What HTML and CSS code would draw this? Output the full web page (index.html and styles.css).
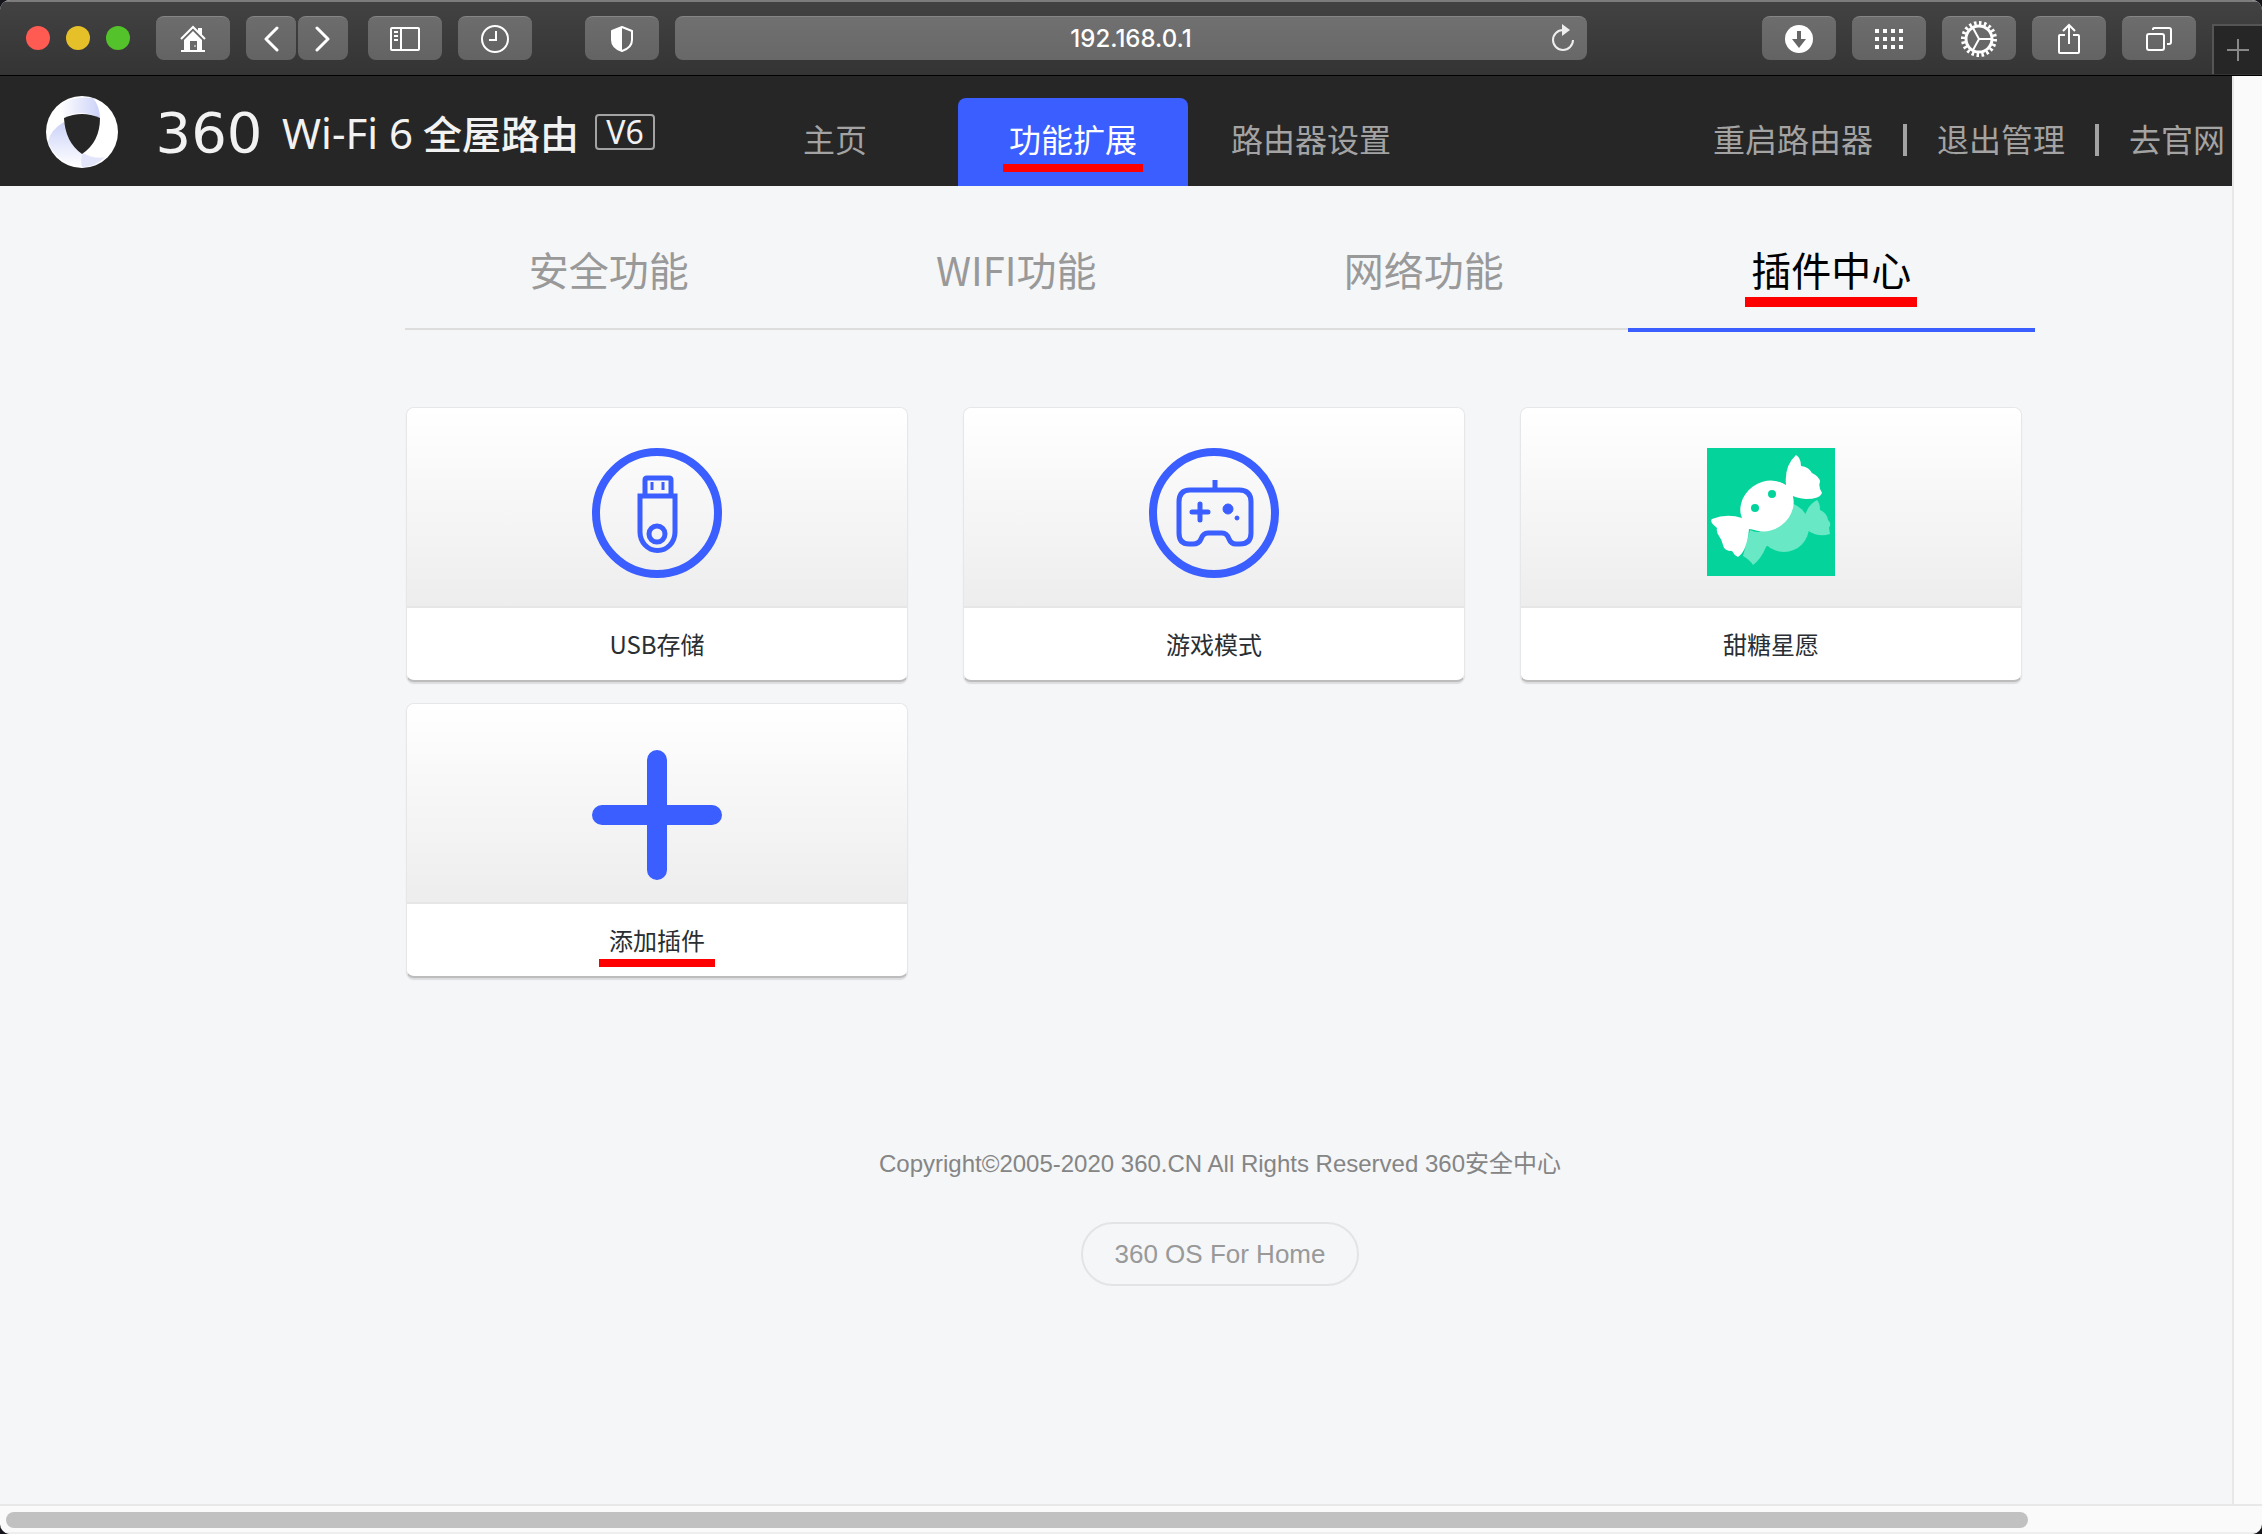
FILE: index.html
```html
<!DOCTYPE html>
<html lang="zh-CN">

<head>
    <meta charset="UTF-8">
    <meta name="viewport" content="width=device-width, initial-scale=1.0">
    <title>360 Wi-Fi 6 全屋路由</title>
    <link rel="stylesheet" href="styles.css">
</head>

<body>
    <div class="window">
        <div class="toolbar">
            <div class="lights">
                <span class="light red"></span>
                <span class="light yellow"></span>
                <span class="light green"></span>
            </div>
            <button class="tool" aria-label="Home">
                <svg width="28" height="28" viewBox="0 0 28 28">
                    <path d="M2 14 L14 2 L26 14" fill="none" stroke="#fff" stroke-width="2" />
                    <path d="M19 3h4v8l-4-4z M14 6 L23 15 V25 H26 V27 H2 V25 H5 V15z" fill="#fff" />
                    <path d="M11 16h7v9h-7z" fill="#6a6a6a" />
                    <path d="M16 20v2" stroke="#fff" />
                </svg>
            </button>
            <div class="history">
                <button class="tool small" aria-label="Back">
                    <svg width="16" height="26" viewBox="0 0 16 26"><path d="M14 2 L3 13 L14 24" fill="none" stroke="#fff" stroke-width="3" stroke-linecap="round" stroke-linejoin="round" /></svg>
                </button>
                <button class="tool small" aria-label="Forward">
                    <svg width="16" height="26" viewBox="0 0 16 26"><path d="M2 2 L13 13 L2 24" fill="none" stroke="#fff" stroke-width="3" stroke-linecap="round" stroke-linejoin="round" /></svg>
                </button>
            </div>
            <button class="tool" aria-label="Sidebar">
                <svg width="30" height="24" viewBox="0 0 30 24" fill="none" stroke="#fff" stroke-width="2">
                    <rect x="1" y="1" width="28" height="22" rx="1" />
                    <path d="M11 1v22M4 5h4M4 9h4M4 13h4" />
                </svg>
            </button>
            <button class="tool" aria-label="Recent">
                <svg width="28" height="28" viewBox="0 0 28 28" fill="none" stroke="#fff" stroke-width="2">
                    <circle cx="14" cy="14" r="13" />
                    <path d="M15 6v9H8" />
                </svg>
            </button>
            <button class="tool privacy" aria-label="Privacy report">
                <svg width="24" height="28" viewBox="0 0 24 28">
                    <path d="M12 2 L22 6 V15 C22 20 18 24 12 26 C6 24 2 20 2 15 V6z" fill="none" stroke="#fff" stroke-width="2" stroke-linejoin="round" />
                    <path d="M12 2 L2 6 V15 C2 20 6 24 12 26z" fill="#fff" />
                </svg>
            </button>
            <div class="address">
                <input type="text" class="url" value="192.168.0.1" aria-label="Address">
                <button class="reload" aria-label="Reload">
                    <svg width="24" height="28" viewBox="0 0 24 28">
                        <path d="M12 6 A10 10 0 1 0 22 16" fill="none" stroke="#eee" stroke-width="2" />
                        <path d="M11 0 L19 6 L11 12z" fill="#eee" />
                    </svg>
                </button>
            </div>
            <div class="tools-right">
                <button class="tool" aria-label="Downloads">
                    <svg width="28" height="28" viewBox="0 0 28 28">
                        <circle cx="14" cy="14" r="14" fill="#fff" />
                        <path d="M12 6h4v8h5l-7 9-7-9h5z" fill="#666" />
                    </svg>
                </button>
                <button class="tool" aria-label="Top sites">
                    <svg width="28" height="20" viewBox="0 0 28 20" stroke="#fff" stroke-width="4" stroke-dasharray="4 4">
                        <path d="M0 2h28M0 10h28M0 18h28" />
                    </svg>
                </button>
                <button class="tool" aria-label="Settings">
                    <svg width="36" height="36" viewBox="0 0 36 36" fill="none" stroke="#fff">
                        <circle cx="18" cy="18" r="13" stroke-width="3" />
                        <circle cx="18" cy="18" r="16" stroke-width="4" pathLength="80" stroke-dasharray="2 2" />
                        <path d="M18 18h12M18 18l-6-11M18 18l-6 11" stroke-width="2" />
                    </svg>
                </button>
                <button class="tool" aria-label="Share">
                    <svg width="24" height="32" viewBox="0 0 24 32" fill="none" stroke="#fff" stroke-width="2">
                        <path d="M8 12H3Q2 12 2 13V29Q2 30 3 30H21Q22 30 22 29V13Q22 12 21 12H16M12 21V2M6 8l6-6 6 6" />
                    </svg>
                </button>
                <button class="tool" aria-label="Tab overview">
                    <svg width="26" height="24" viewBox="0 0 26 24" fill="none" stroke="#fff" stroke-width="2">
                        <rect x="1" y="7" width="17" height="16" rx="2" />
                        <path d="M7 3V2Q7 1 8 1H23Q25 1 25 3V15Q25 17 23 17H21" />
                    </svg>
                </button>
            </div>
            <button class="new-tab" aria-label="New tab">
                <svg width="22" height="22" viewBox="0 0 22 22"><path d="M11 0v22M0 11h22" stroke="#888" stroke-width="2" /></svg>
            </button>
        </div>

        <div class="viewport">
            <div class="page">
                <header class="header">
                    <div class="brand">
                        <svg class="brand-mark" width="72" height="72" viewBox="0 0 72 72">
                            <defs>
                                <linearGradient id="foldTop" x1="0" y1="0" x2="1" y2="0">
                                    <stop offset="0" stop-color="#fff" />
                                    <stop offset="1" stop-color="#ccd2f8" />
                                </linearGradient>
                                <linearGradient id="foldLeft" x1="0" y1="0" x2="0" y2="1">
                                    <stop offset="0" stop-color="#ccd2f8" />
                                    <stop offset="1" stop-color="#fff" />
                                </linearGradient>
                            </defs>
                            <circle cx="36" cy="36" r="36" fill="#fff" />
                            <path d="M14 8 Q28 0 47 2 Q54 10 54 23 Q38 12 18 21z" fill="url(#foldTop)" />
                            <path d="M18 26 Q4 34 2 46 Q10 66 32 71 Q44 68 58 61 Q46 62 36 57 Q20 46 18 26z" fill="url(#foldLeft)" />
                            <path d="M37 57 Q48 64 59 61 Q50 71 36 71 Q34 64 37 57z" fill="#e3e6fb" />
                            <path d="M18 22 Q36 14 54 22 Q54 46 36 58 Q19 46 18 22z" fill="#262626" />
                        </svg>
                        <span class="brand-360">360</span>
                        <span class="brand-wifi">Wi-Fi 6</span>
                        <span class="brand-name">全屋路由</span>
                        <span class="brand-model">V6</span>
                    </div>
                    <nav class="nav">
                        <a href="#">主页</a>
                        <a href="#" class="active"><span class="marked">功能扩展</span></a>
                        <a href="#">路由器设置</a>
                    </nav>
                    <div class="actions">
                        <a href="#">重启路由器</a>
                        <span class="divider"></span>
                        <a href="#">退出管理</a>
                        <span class="divider"></span>
                        <a href="#">去官网</a>
                    </div>
                </header>

                <main class="content">
                    <nav class="tabs">
                        <a href="#">安全功能</a>
                        <a href="#">WIFI功能</a>
                        <a href="#">网络功能</a>
                        <a href="#" class="active"><span class="marked">插件中心</span></a>
                    </nav>

                    <div class="cards">
                        <a href="#" class="card">
                            <div class="card-icon">
                                <svg width="130" height="130" viewBox="0 0 130 130" fill="none" stroke="#3a5eff">
                                    <circle cx="65" cy="65" r="61" stroke-width="8" />
                                    <path d="M53 47V32Q53 30 55 30H77Q79 30 79 32V47" stroke-width="5" />
                                    <path d="M48 48H83V84A17 18 0 0 1 48 84z" stroke-width="5" />
                                    <circle cx="65" cy="86" r="8" stroke-width="5" />
                                    <path d="M60 34v8M71 34v8" stroke-width="3" />
                                </svg>
                            </div>
                            <div class="card-label">USB存储</div>
                        </a>
                        <a href="#" class="card">
                            <div class="card-icon">
                                <svg width="130" height="130" viewBox="0 0 130 130" fill="none" stroke="#3a5eff">
                                    <circle cx="65" cy="65" r="61" stroke-width="8" />
                                    <path d="M41 42H90Q102 42 102 54V85Q102 96 91 96H87Q82 96 80 91Q78 85 73 85H59Q54 85 52 91Q50 96 44 96H40Q30 96 30 85V54Q30 42 41 42z" stroke-width="5" />
                                    <path d="M66 32v10" stroke-width="5" />
                                    <path d="M51 56v16M43 64h16" stroke-width="5" stroke-linecap="round" />
                                    <circle cx="79" cy="61" r="5" fill="#3a5eff" />
                                    <circle cx="88" cy="70" r="2" fill="#3a5eff" />
                                </svg>
                            </div>
                            <div class="card-label">游戏模式</div>
                        </a>
                        <a href="#" class="card">
                            <div class="card-icon">
                                <svg width="128" height="128" viewBox="0 0 128 128">
                                    <rect width="128" height="128" fill="#04d49c" />
                                    <g fill="#68e8c4">
                                        <circle cx="77" cy="79" r="25" />
                                        <path d="M86 64 Q92 70 97 72 Q99 58 110 52 Q113 55 113 62 Q120 65 121 72 Q125 75 122 80 L123 86 Q111 90 100 82 L98 92z" />
                                        <path d="M43 82 Q52 87 60 80 L66 98 Q60 96 59 99 Q54 111 46 117 Q43 112 36 108z" />
                                    </g>
                                    <g fill="#fff">
                                        <ellipse cx="60" cy="58" rx="28" ry="24" transform="rotate(-36 60 58)" />
                                        <path d="M66 34 Q74 34 79 37 Q77 18 89 7 Q94 10 94 18 Q102 19 105 25 Q113 29 113 34 Q111 38 115 45 Q113 51 99 51 Q90 50 86 48 L84 62z" />
                                        <path d="M36 54 L35 70 Q20 65 5 71 Q2 74 10 80 Q9 84 12 88 Q15 92 16 97 Q17 103 25 103 Q27 107 31 109 Q40 103 42 81 L56 83z" />
                                    </g>
                                    <circle cx="48" cy="60" r="4" fill="#04d49c" />
                                    <circle cx="65" cy="46" r="4" fill="#04d49c" />
                                </svg>
                            </div>
                            <div class="card-label">甜糖星愿</div>
                        </a>
                        <a href="#" class="card">
                            <div class="card-icon">
                                <svg width="130" height="142" viewBox="0 0 130 142">
                                    <path d="M65 16v110M10 71h110" stroke="#3a5eff" stroke-width="20" stroke-linecap="round" />
                                    <path d="M52 71l13-13 13 13-13 13z" fill="#3a5eff" />
                                </svg>
                            </div>
                            <div class="card-label"><span class="marked">添加插件</span></div>
                        </a>
                    </div>

                    <footer class="footer">
                        <p>Copyright©2005-2020 360.CN All Rights Reserved 360安全中心</p>
                        <a href="#" class="os-link">360 OS For Home</a>
                    </footer>
                </main>
            </div>
            <div class="scroll-y"></div>
        </div>

        <div class="scroll-x">
            <div class="thumb"></div>
        </div>
    </div>
</body>

</html>
```
FILE: styles.css
```css
* {
    margin: 0;
    padding: 0;
    box-sizing: border-box;
}

body {
    background-color: #15151c;
    font-family: "Noto Sans CJK SC", sans-serif;
}

a {
    text-decoration: none;
    color: inherit;
}

button {
    border: none;
    cursor: pointer;
}

svg {
    display: block;
}

.window {
    display: flex;
    flex-direction: column;
    height: 100vh;
    border-radius: 10px;
    overflow: hidden;
    background-color: #fafafa;
}

/* browser toolbar */

.toolbar {
    display: flex;
    align-items: center;
    gap: 16px;
    height: 76px;
    padding: 0 0 1px 26px;
    border-top: 2px solid #7c7c7c;
    border-bottom: 1px solid #000;
    background: linear-gradient(#424242, #343434);
}

.lights {
    display: flex;
    gap: 16px;
    margin-right: 10px;
}

.light {
    width: 24px;
    height: 24px;
    border-radius: 50%;
}

.red {
    background-color: #ff5b52;
}

.yellow {
    background-color: #e6c029;
}

.green {
    background-color: #53c22b;
}

.tool {
    display: flex;
    align-items: center;
    justify-content: center;
    flex-shrink: 0;
    width: 74px;
    height: 44px;
    border-top: 1px solid #858585;
    border-radius: 8px;
    background: linear-gradient(#6d6d6d, #636363);
}

.small {
    width: 50px;
}

.history {
    display: flex;
    gap: 2px;
    margin-right: 4px;
}

.privacy {
    margin-left: 37px;
}

.address {
    position: relative;
    flex: 1;
}

.url {
    display: block;
    width: 100%;
    height: 44px;
    border: none;
    border-top: 1px solid #858585;
    border-radius: 8px;
    background: linear-gradient(#707070, #686868);
    color: #fff;
    font-family: Inter, sans-serif;
    font-size: 24px;
    font-weight: 500;
    text-align: center;
}

.reload {
    position: absolute;
    top: 8px;
    right: 12px;
    background: none;
}

.tools-right {
    display: flex;
    gap: 16px;
    margin-left: 159px;
}

.new-tab {
    display: flex;
    align-items: center;
    justify-content: center;
    align-self: flex-end;
    width: 50px;
    height: 50px;
    border-top: 2px solid #555;
    border-left: 2px solid #555;
    background-color: #262626;
}

/* router page */

.viewport {
    display: flex;
    flex: 1;
    min-height: 0;
}

.page {
    flex: 1;
    background-color: #f4f6f8;
}

.scroll-y {
    width: 30px;
    border-left: 2px solid #e8e8e8;
    background-color: #fafafa;
}

.header {
    display: flex;
    height: 110px;
    padding: 0 7px 0 46px;
    background-color: #262626;
    color: #a3a3a3;
    font-size: 32px;
}

.brand {
    display: flex;
    align-items: center;
    width: 674px;
    padding-top: 2px;
    color: #f2f2f2;
    white-space: nowrap;
}

.brand-mark {
    margin-right: 18px;
}

.brand-360 {
    width: 146px;
    font-family: "DejaVu Sans", sans-serif;
    font-size: 56px;
    text-align: center;
}

.brand-wifi {
    margin-right: 10px;
    font-family: "Noto Sans", sans-serif;
    font-size: 42px;
}

.brand-name {
    font-size: 39px;
    font-weight: 500;
}

.brand-model {
    margin-left: 16px;
    width: 60px;
    height: 36px;
    border: 2px solid #a3a3a3;
    border-radius: 4px;
    font-family: "Noto Sans", sans-serif;
    font-size: 32px;
    line-height: 32px;
    text-align: center;
}

.nav {
    display: flex;
    align-items: flex-end;
    gap: 8px;
}

.nav a {
    width: 230px;
    height: 88px;
    border-radius: 8px 8px 0 0;
    line-height: 80px;
    text-align: center;
}

.nav .active {
    background-color: #3a5eff;
    color: #fff;
}

.actions {
    display: flex;
    align-items: center;
    gap: 30px;
    margin-left: auto;
    padding-top: 18px;
}

.actions a {
    padding-bottom: 4px;
}

.divider {
    width: 4px;
    height: 32px;
    background-color: #a3a3a3;
}

/* red underline under the items to click */

.marked {
    position: relative;
    display: inline-block;
}

.marked::after {
    content: "";
    position: absolute;
    left: -6px;
    right: -6px;
    height: 8px;
    background-color: #f00;
}

.nav .marked::after {
    bottom: 6px;
}

.tabs .marked::after {
    bottom: -8px;
    height: 10px;
}

.card-label .marked::after {
    left: -10px;
    right: -10px;
    bottom: 9px;
}

.content {
    margin: 0 197px 0 405px;
}

.tabs {
    display: flex;
    height: 146px;
    color: #999;
    font-size: 40px;
    line-height: 60px;
    text-align: center;
}

.tabs a {
    flex: 1;
    height: 144px;
    padding-top: 53px;
    border-bottom: 2px solid #ddd;
}

.tabs .active {
    height: 146px;
    border-bottom: 4px solid #3a5eff;
    color: #000;
}

.cards {
    display: grid;
    grid-template-columns: repeat(3, 1fr);
    gap: 21px 55px;
    margin: 75px 13px 0 1px;
}

.card {
    border: 1px solid #e6e7e9;
    border-bottom: 2px solid #bcbcbc;
    border-radius: 8px;
    box-shadow: 0 2px 1px #dcdddf;
    background-color: #fff;
    color: #292e33;
}

.card-icon {
    display: flex;
    justify-content: center;
    height: 200px;
    padding-top: 40px;
    border-bottom: 2px solid #e6e6e6;
    border-radius: 8px 8px 0 0;
    background: linear-gradient(#fff, #ededed);
}

.card-label {
    height: 72px;
    font-size: 24px;
    line-height: 72px;
    text-align: center;
}

.footer {
    display: flex;
    flex-direction: column;
    align-items: center;
    gap: 40px;
    margin-top: 168px;
    color: #858585;
    font-family: "Liberation Sans", "Noto Sans CJK SC", sans-serif;
    font-size: 24px;
    line-height: 36px;
}

.os-link {
    padding: 0 32px;
    border: 2px solid #e3e4e6;
    border-radius: 32px;
    color: #999;
    font-size: 26px;
    line-height: 60px;
}

.scroll-x {
    height: 30px;
    padding: 6px 234px 4px 6px;
    border-top: 2px solid #e8e8e8;
    border-bottom: 2px solid #eee;
}

.thumb {
    height: 16px;
    border-radius: 8px;
    background-color: #c1c1c1;
}
```
